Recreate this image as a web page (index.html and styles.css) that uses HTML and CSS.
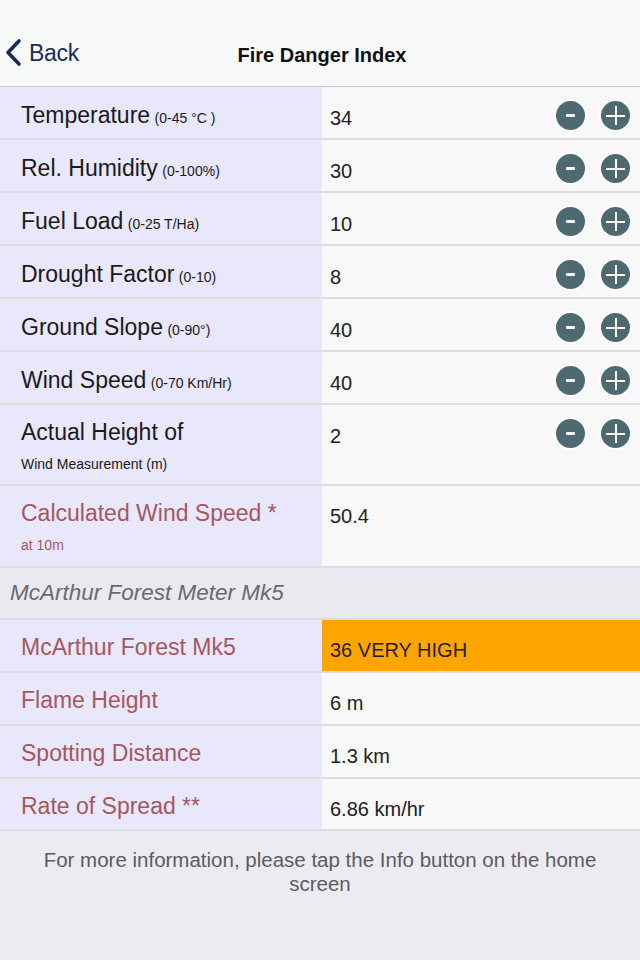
FILE: index.html
```html
<!DOCTYPE html>
<html>
<head>
<meta charset="utf-8">
<link rel="stylesheet" href="styles.css">
</head>
<body>
<div class="nav">
  <div class="back">
    <svg class="chev" width="24" height="30" viewBox="0 0 24 30"><polyline points="15,3 4,14.5 15,26" fill="none" stroke="#1b2a5c" stroke-width="3.6" stroke-linecap="round" stroke-linejoin="round"/></svg>
    <span class="back-text">Back</span>
  </div>
  <div class="title">Fire Danger Index</div>
</div>

<div class="table">
  <div class="row">
    <div class="lab"><span class="main">Temperature</span> <span class="range">(0-45 °C )</span></div>
    <div class="val"><span class="num">34</span><div class="btns"><span class="btn minus"></span><span class="btn plus"></span></div></div>
  </div>
  <div class="row">
    <div class="lab"><span class="main">Rel. Humidity</span> <span class="range">(0-100%)</span></div>
    <div class="val"><span class="num">30</span><div class="btns"><span class="btn minus"></span><span class="btn plus"></span></div></div>
  </div>
  <div class="row">
    <div class="lab"><span class="main">Fuel Load</span> <span class="range">(0-25 T/Ha)</span></div>
    <div class="val"><span class="num">10</span><div class="btns"><span class="btn minus"></span><span class="btn plus"></span></div></div>
  </div>
  <div class="row">
    <div class="lab"><span class="main">Drought Factor</span> <span class="range">(0-10)</span></div>
    <div class="val"><span class="num">8</span><div class="btns"><span class="btn minus"></span><span class="btn plus"></span></div></div>
  </div>
  <div class="row">
    <div class="lab"><span class="main">Ground Slope</span> <span class="range">(0-90°)</span></div>
    <div class="val"><span class="num">40</span><div class="btns"><span class="btn minus"></span><span class="btn plus"></span></div></div>
  </div>
  <div class="row">
    <div class="lab"><span class="main">Wind Speed</span> <span class="range">(0-70 Km/Hr)</span></div>
    <div class="val"><span class="num">40</span><div class="btns"><span class="btn minus"></span><span class="btn plus"></span></div></div>
  </div>
  <div class="row tall">
    <div class="lab"><span class="main">Actual Height of</span><span class="sub">Wind Measurement (m)</span></div>
    <div class="val"><span class="num">2</span><div class="btns"><span class="btn minus"></span><span class="btn plus"></span></div></div>
  </div>
  <div class="row tall calc">
    <div class="lab red"><span class="main">Calculated Wind Speed *</span><span class="sub">at 10m</span></div>
    <div class="val"><span class="num">50.4</span></div>
  </div>
  <div class="section">McArthur Forest Meter Mk5</div>
  <div class="row res">
    <div class="lab red"><span class="main">McArthur Forest Mk5</span></div>
    <div class="val orange"><span class="num">36 VERY HIGH</span></div>
  </div>
  <div class="row res">
    <div class="lab red"><span class="main">Flame Height</span></div>
    <div class="val"><span class="num">6 m</span></div>
  </div>
  <div class="row res">
    <div class="lab red"><span class="main">Spotting Distance</span></div>
    <div class="val"><span class="num">1.3 km</span></div>
  </div>
  <div class="row res">
    <div class="lab red"><span class="main">Rate of Spread **</span></div>
    <div class="val"><span class="num">6.86 km/hr</span></div>
  </div>
</div>

<div class="footer">For more information, please tap the Info button on the home screen</div>
</body>
</html>
```

FILE: styles.css
```css
* { box-sizing: border-box; }
html, body {
  margin: 0;
  padding: 0;
  width: 640px;
  height: 960px;
  overflow: hidden;
  background: #ecebf1;
  font-family: "Liberation Sans", Arial, Helvetica, sans-serif;
  color: #1a1a1a;
}
.nav {
  height: 87px;
  background: #f8f9f9;
  border-bottom: 1px solid #c9c9cd;
  position: relative;
  display: flex;
  align-items: flex-end;
  justify-content: center;
  padding-bottom: 19px;
}
.back {
  position: absolute;
  left: 4px;
  top: 38px;
  display: flex;
  align-items: center;
  gap: 1px;
}
.chev { display: block; }
.back-text {
  font-size: 23px;
  color: #1b2a5c;
  letter-spacing: -0.3px;
}
.title {
  font-size: 20px;
  font-weight: bold;
  color: #111;
  padding-left: 4px;
}
.table { display: flex; flex-direction: column; }
.row {
  display: flex;
  height: 53px;
  border-bottom: 2px solid #dddde0;
}
.lab {
  width: 322px;
  flex: none;
  background: #e9e7fb;
  padding: 15px 0 0 21px;
  display: flex;
  flex-direction: column;
}
.lab .main {
  font-size: 23px;
  line-height: 26px;
}
.row:not(.tall) .lab { display: block; }
.range {
  font-size: 14px;
}
.sub {
  font-size: 14px;
  margin-top: 11px;
}
.red { color: #a5575d; }
.val {
  flex: 1;
  background: #f8f8f8;
  display: flex;
  justify-content: space-between;
  align-items: flex-start;
  padding: 19px 8px 0 8px;
}
.num {
  font-size: 20px;
  line-height: 24px;
  color: #222;
}
.btns {
  display: flex;
  gap: 12px;
  margin-top: -7px;
}
.btn {
  width: 33px;
  height: 33px;
  border-radius: 50%;
  background: #4e6a70;
  border: 2px solid #ffffff;
  position: relative;
  display: block;
}
.btn::before, .btn::after {
  content: "";
  position: absolute;
  background: #ffffff;
}
.minus::before {
  width: 9px;
  height: 3px;
  left: 10px;
  top: 13px;
  border-radius: 1px;
}
.minus::after { display: none; }
.plus::before {
  width: 19px;
  height: 2px;
  left: 5px;
  top: 13.5px;
}
.plus::after {
  width: 2px;
  height: 19px;
  left: 13.5px;
  top: 5px;
}
.row.tall { height: 81px; }
.row.tall .lab { padding-top: 14px; }
.row.calc { height: 82px; }
.row.calc .lab { padding-top: 14px; }
.row.calc .sub { margin-top: 11px; }
.row.calc .val { padding-top: 18px; }
.section {
  height: 52px;
  background: #ebe9f0;
  border-bottom: 2px solid #dcdbe0;
  font-style: italic;
  font-size: 22.5px;
  color: #6a6a6e;
  padding: 12px 0 0 10px;
}
.row.res .lab { padding-top: 14px; }
.row.res .val { padding-top: 18px; }
.row.res:last-child { height: 52px; }
.orange { background: #ffa500; }
.footer {
  text-align: center;
  font-size: 20.5px;
  line-height: 24px;
  color: #5c5b60;
  padding: 17px 36px 0;
}
```
